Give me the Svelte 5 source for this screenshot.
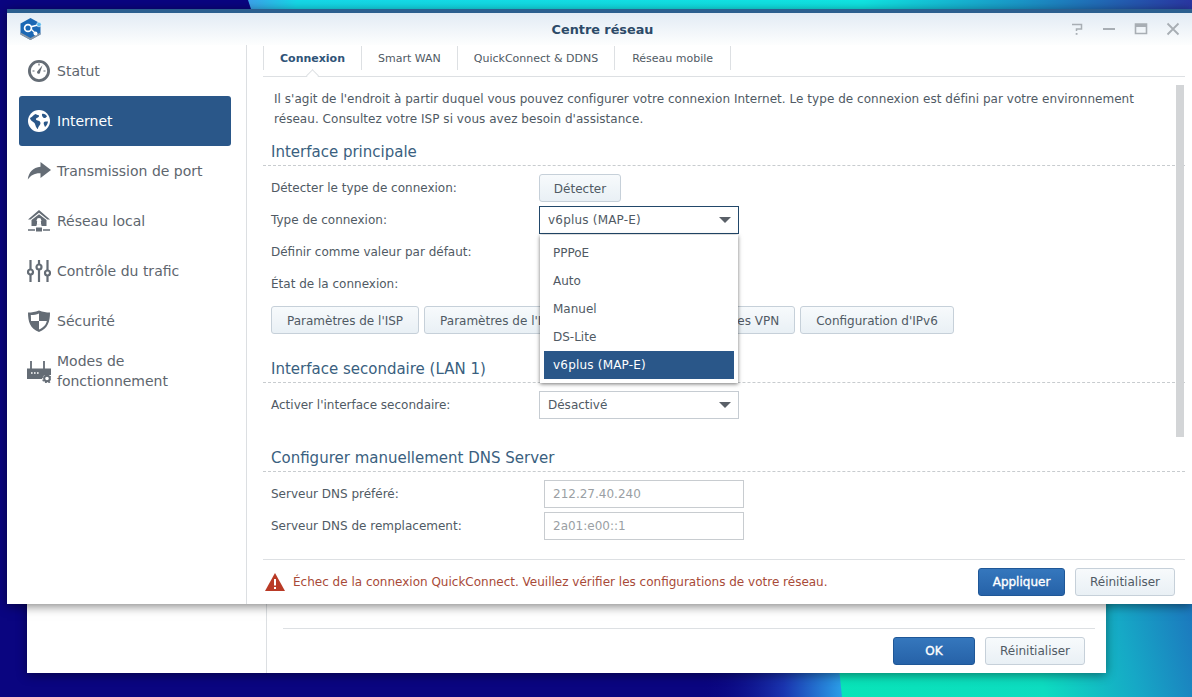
<script>
  const nav = [
    { id: 'gauge', label: 'Statut' },
    { id: 'globe', label: 'Internet', active: true },
    { id: 'share', label: 'Transmission de port' },
    { id: 'home', label: 'Réseau local' },
    { id: 'sliders', label: 'Contrôle du trafic' },
    { id: 'shield', label: 'Sécurité' },
    { id: 'router', label: 'Modes de fonctionnement' }
  ];
  const tabs = ['Connexion', 'Smart WAN', 'QuickConnect & DDNS', 'Réseau mobile'];
  const options = ['PPPoE', 'Auto', 'Manuel', 'DS-Lite', 'v6plus (MAP-E)'];
  const actions = ["Paramètres de l'ISP", "Paramètres de l'IPTV et de la VoIP", 'Paramètres VPN', "Configuration d'IPv6"];
</script>

{#snippet caret()}
  <svg class="caret" viewBox="0 0 12 6" width="12" height="6"><path d="M0 0h12L6 6z" /></svg>
{/snippet}

{#snippet icon(id)}
  <svg class="ico" viewBox="0 0 24 24" width="24" height="24">
    {#if id === 'gauge'}
      <circle cx="12" cy="12" r="9.6" fill="none" stroke="currentColor" stroke-width="2.8" />
      <path d="M15.5 6.2 13.2 13a1.6 1.6 0 1 1-2.6-1z" fill="currentColor" />
      <path d="M12 4.5v2M5.5 12h2M18.5 12h-2" stroke="currentColor" stroke-width="1.2" />
    {:else if id === 'globe'}
      <circle cx="12" cy="12" r="11" fill="currentColor" />
      <path d="M3 9c2-.5 3-3 5.5-4 1 1.2 3.5.5 3.5 2 0 2-3.5 1.5-3 3.5.5 1.500 4.500.8 4.500 3.500 0 2.500-2.500 3-2.500 6-2-.5-2.500-4.500-3.500-6C6 12.500 3.500 12 3 9zM15 5c2-.5 4 .5 5 2.500-1 .5-1.500 2-3 1.500-1-.5-2.500-2.500-2-4zM17 13c1.500-.8 3.500-.5 4-.5-.3 2.500-1.500 4.500-3 5.500-.5-1.500-2-3.500-1-5z" fill="#2a5789" />
    {:else if id === 'share'}
      <path d="M13.500 3.500 24 11.500l-10.500 8v-4.800C7.500 14.500 3.500 17 .8 21 1.500 14 6 8.700 13.500 8.200z" fill="currentColor" transform="translate(0 -.5)" />
    {:else if id === 'home'}
      <path d="M12 1 23 10.500h-2.500L12 3.800 3.500 10.500H1z" fill="currentColor" />
      <path d="M4.500 11 12 5.200l7.500 5.800v6h-5v-1.500h-5V17h-5z" fill="currentColor" />
      <circle cx="12" cy="11.300" r="2.300" fill="#fff" />
      <rect x="10" y="13" width="4" height="2.800" fill="#fff" />
      <path d="M1 21h7M16 21h7" stroke="currentColor" stroke-width="1.600" />
      <rect x="9" y="18.500" width="6" height="4" fill="currentColor" />
    {:else if id === 'sliders'}
      <g stroke="currentColor" stroke-width="2.200" fill="none">
        <path d="M3.500 1v9M3.500 16v7M12 1v4M12 11v12M20.500 1v10M20.500 17v6" />
        <circle cx="3.500" cy="13" r="2.500" />
        <circle cx="12" cy="8" r="2.500" />
        <circle cx="20.500" cy="14" r="2.500" />
      </g>
    {:else if id === 'shield'}
      <path d="M12 1.500c4 1.500 7 2 11 2 0 9-2 16-11 19.500C3 19.500 1 12.500 1 3.500c4 0 7-.5 11-2z" fill="currentColor" />
      <path d="M12 4.500V12H4c0-2 0-3.500-.2-6 3 0 5.700-.5 8.200-1.500zM12 12h7.800c-.7 3.500-3 6.500-7.800 8.500z" fill="#fff" />
    {:else}
      <path d="M4 2v8M17 2v8" stroke="currentColor" stroke-width="1.800" />
      <path d="M0 9.500h24v6.500h-6.500a6 6 0 0 0-2.500 4H0z" fill="currentColor" />
      <path d="M4 14h1.600M7 14h1.600M10 14h1.600" stroke="#fff" stroke-width="1.600" />
      <circle cx="20" cy="19.500" r="2.800" fill="none" stroke="currentColor" stroke-width="2" />
      <circle cx="20" cy="19.500" r="4.300" fill="none" stroke="currentColor" stroke-width="1.400" stroke-dasharray="1.800 1.600" />
    {/if}
  </svg>
{/snippet}

{#snippet footerButtons(primary)}
  <button class="btn primary" class:wide={primary === 'OK'}>{primary}</button>
  <button class="btn">Réinitialiser</button>
{/snippet}

<div class="desktop">
  <svg class="wallpaper" viewBox="0 0 1192 697" width="1192" height="697" aria-hidden="true">
    <defs>
      <linearGradient id="top" x1="250" x2="1192" y1="0" y2="0" gradientUnits="userSpaceOnUse">
        <stop offset="0" stop-color="#3aa4ea" />
        <stop offset="0.05" stop-color="#15d8e8" />
        <stop offset="0.65" stop-color="#10e4e2" />
        <stop offset="0.82" stop-color="#1a96c8" />
        <stop offset="1" stop-color="#2a36a2" />
      </linearGradient>
      <linearGradient id="glow" x1="700" x2="840" y1="0" y2="0" gradientUnits="userSpaceOnUse">
        <stop offset="0" stop-color="#0a0580" stop-opacity="0" />
        <stop offset="0.6" stop-color="#1a35b0" />
        <stop offset="1" stop-color="#2a9be6" />
      </linearGradient>
      <linearGradient id="bot" x1="840" x2="1192" y1="700" y2="610" gradientUnits="userSpaceOnUse">
        <stop offset="0" stop-color="#08e4b8" />
        <stop offset="0.55" stop-color="#0ddcc0" />
        <stop offset="0.8" stop-color="#16a8c6" />
        <stop offset="1" stop-color="#1c78be" />
      </linearGradient>
    </defs>
    <rect width="1192" height="697" fill="#0a0580" />
    <polygon points="248,0 1192,0 1192,12 252,12" fill="url(#top)" />
    <rect x="700" y="670" width="146" height="27" fill="url(#glow)" />
    <polygon points="832,600 1192,600 1192,697 842,697" fill="url(#bot)" />
  </svg>

  <section class="window back">
    <div class="win-body">
      <div class="side"></div>
      <div class="main">
        <div class="filler"></div>
        <div class="footer">
          <div class="spacer"></div>
          {@render footerButtons('OK')}
        </div>
      </div>
    </div>
  </section>

  <section class="window front">
    <header class="titlebar">
      <svg class="logo" viewBox="0 0 24 24" width="24" height="24">
        <path d="M11.500 1 21.500 6.500v11L11.500 23 1.500 17.500v-11z" fill="#1c68b4" />
        <path d="M1.500 17.500 11.500 23l10-5.500V15.500L11.500 21 1.500 15.500z" fill="#8d98a4" />
        <path d="M11 10 19 8M12 12l4.500 4.500" stroke="#fff" stroke-width="1.300" fill="none" />
        <circle cx="9" cy="11" r="3.400" fill="#1c68b4" stroke="#fff" stroke-width="1.700" />
        <circle cx="16.500" cy="16.500" r="2" fill="#fff" />
        <circle cx="20" cy="7.500" r="2.300" fill="#5ab8ec" stroke="#fff" stroke-width=".6" />
      </svg>
      <h1>Centre réseau</h1>
      <div class="winctl">
        <svg viewBox="0 0 14 14" width="14" height="14"><path d="M2 2.500h9.500v4.500H6.500v2" fill="none" stroke-width="1.500" /><path d="M5.700 11h1.800v1.800H5.700z" class="fill" /></svg>
        <svg viewBox="0 0 14 14" width="14" height="14"><path d="M1 7h12" fill="none" stroke-width="2" /></svg>
        <svg viewBox="0 0 14 14" width="14" height="14"><path d="M1.500 2h11v9.500h-11z" fill="none" stroke-width="1.600" /><path d="M1 2h12v3H1z" class="fill" /></svg>
        <svg viewBox="0 0 14 14" width="14" height="14"><path d="M1.500 1.500l11 11M12.500 1.500l-11 11" fill="none" stroke-width="1.800" /></svg>
      </div>
    </header>

    <div class="win-body">
      <nav class="side">
        {#each nav as item}
          <a class="nav-item" class:active={item.active} href="#top">
            {@render icon(item.id)}
            <span>{item.label}</span>
          </a>
        {/each}
      </nav>

      <div class="main">
        <div class="tabs">
          {#each tabs as tab, i}
            <button class="tab" class:current={i === 0}>{tab}</button>
          {/each}
        </div>

        <div class="panel">
          <p class="intro">Il s'agit de l'endroit à partir duquel vous pouvez configurer votre connexion Internet. Le type de connexion est défini par votre environnement<br />réseau. Consultez votre ISP si vous avez besoin d'assistance.</p>

          <h2>Interface principale</h2>
          <div class="rows">
            <div class="row"><label>Détecter le type de connexion:</label><button class="btn detect">Détecter</button></div>
            <div class="row">
              <label>Type de connexion:</label>
              <div class="select open">
                <span class="wider">v6plus (MAP-E)</span>
                {@render caret()}
                <ul class="menu">
                  {#each options as opt, i}
                    <li class:sel={i === options.length - 1}>{opt}</li>
                  {/each}
                </ul>
              </div>
            </div>
            <div class="row"><label>Définir comme valeur par défaut:</label></div>
            <div class="row"><label>État de la connexion:</label></div>
          </div>
          <div class="actions">
            {#each actions as a}
              <button class="btn">{a}</button>
            {/each}
          </div>

          <h2 class="second">Interface secondaire (LAN 1)</h2>
          <div class="rows">
            <div class="row">
              <label>Activer l'interface secondaire:</label>
              <div class="select"><span>Désactivé</span>{@render caret()}</div>
            </div>
          </div>

          <h2 class="third">Configurer manuellement DNS Server</h2>
          <div class="rows">
            <div class="row"><label>Serveur DNS préféré:</label><div class="input">212.27.40.240</div></div>
            <div class="row"><label>Serveur DNS de remplacement:</label><div class="input">2a01:e00::1</div></div>
          </div>

          <div class="scrollbar"></div>
        </div>

        <div class="footer">
          <svg class="warn" viewBox="0 0 20 18" width="20" height="18">
            <path d="M10 0 20 18H0z" fill="#b93a26" />
            <path d="M9 6h2v6.500H9zM9 14h2v2H9z" fill="#fff" />
          </svg>
          <span class="msg">Échec de la connexion QuickConnect. Veuillez vérifier les configurations de votre réseau.</span>
          <div class="spacer"></div>
          {@render footerButtons('Appliquer')}
        </div>
      </div>
    </div>
  </section>
</div>

<style>
  :global(body) {
    margin: 0;
    overflow: hidden;
    background: #0a0580;
  }
  .desktop {
    position: relative;
    width: 1192px;
    height: 697px;
    overflow: hidden;
    font-family: "DejaVu Sans", Verdana, sans-serif;
    font-size: 12px;
    color: #505a64;
  }
  .wallpaper {
    position: absolute;
    inset: 0;
  }
  .window {
    position: absolute;
    display: flex;
    flex-direction: column;
    background: #fff;
  }
  .back {
    left: 27px;
    top: 300px;
    width: 1079px;
    height: 373px;
    box-shadow: 0 2px 10px rgba(0, 0, 0, 0.45);
  }
  .back .main {
    padding-right: 11px;
  }
  .front {
    left: 7px;
    top: 9px;
    width: 1185px;
    height: 595px;
    border-top: 4px solid #2b5f8f;
    box-sizing: border-box;
    box-shadow: 0 2px 10px rgba(0, 0, 0, 0.5);
  }
  .titlebar {
    position: relative;
    display: flex;
    align-items: center;
    justify-content: center;
    height: 32px;
    flex: none;
    background: linear-gradient(#e2ebf4, #fdfefe);
  }
  .logo {
    position: absolute;
    left: 12px;
    top: 4px;
  }
  h1 {
    margin: 0;
    font-size: 12.8px;
    font-weight: 700;
    color: #2c4a68;
    transform: translateX(3px);
  }
  .winctl {
    position: absolute;
    right: 12px;
    top: 9px;
    display: flex;
    gap: 18px;
  }
  .winctl svg {
    stroke: #a8aeb4;
  }
  .winctl .fill {
    fill: #a8aeb4;
    stroke: none;
  }
  .win-body {
    flex: 1;
    display: flex;
    min-height: 0;
  }
  .side {
    width: 239px;
    flex: none;
    padding-top: 1px;
    border-right: 1px solid #dcdfe2;
  }
  .nav-item {
    display: flex;
    align-items: center;
    gap: 6px;
    height: 50px;
    margin: 0 15px 0 12px;
    padding-left: 8px;
    border-radius: 3px;
    font-size: 14px;
    line-height: 20px;
    color: #5e666e;
    text-decoration: none;
  }
  .nav-item:last-child span {
    width: 130px;
  }
  .ico {
    flex: none;
    color: #646c75;
  }
  .nav-item.active {
    background: #2a5789;
    color: #fff;
  }
  .nav-item.active .ico {
    color: #fff;
  }
  .main {
    position: relative;
    flex: 1;
    min-width: 0;
    display: flex;
    flex-direction: column;
    margin-left: 16px;
    padding-right: 7px;
  }
  .filler {
    flex: 1;
  }
  .tabs {
    display: flex;
    flex: none;
    height: 32px;
    box-sizing: border-box;
    padding-top: 1px;
    border-bottom: 1px solid #dde0e3;
  }
  .tab {
    position: relative;
    height: 24px;
    padding: 0 16px;
    border: 0;
    border-right: 1px solid #dde0e3;
    background: none;
    font: inherit;
    font-size: 11px;
    color: #505a64;
  }
  .tab:first-child {
    border-left: 1px solid #dde0e3;
  }
  .tab:last-child {
    padding: 0 17px;
  }
  .tab.current {
    font-weight: 700;
    color: #2f5478;
  }
  .tab.current::after {
    content: "";
    position: absolute;
    left: 44px;
    top: 25px;
    width: 8px;
    height: 8px;
    background: #fff;
    border-left: 1px solid #dde0e3;
    border-top: 1px solid #dde0e3;
    transform: rotate(45deg);
  }
  .panel {
    position: relative;
    flex: 1;
    min-height: 0;
  }
  .intro {
    margin: 0;
    padding: 12px 0 9px 11px;
    line-height: 20px;
    letter-spacing: 0.04px;
    white-space: nowrap;
  }
  h2 {
    margin: 0;
    height: 27px;
    padding-left: 8px;
    border-bottom: 1px dashed #c8cccf;
    font-size: 15px;
    font-weight: 400;
    line-height: 29px;
    color: #3a5f80;
  }
  h2.second {
    margin-top: 21px;
  }
  h2.third {
    margin-top: 25px;
  }
  .rows {
    display: flex;
    flex-direction: column;
    gap: 4px;
    margin-top: 8px;
    padding-left: 8px;
  }
  .row {
    display: grid;
    grid-template-columns: 268px auto;
    justify-content: start;
    align-items: center;
    height: 28px;
  }
  .actions {
    display: flex;
    gap: 5px;
    margin-top: 8px;
    padding-left: 8px;
  }
  .btn {
    height: 28px;
    padding: 1px 15px 0;
    border: 1px solid #c6d0d9;
    border-radius: 3px;
    background: linear-gradient(#f7fafc, #e9f0f5);
    font: inherit;
    color: #505a64;
    white-space: nowrap;
  }
  .actions .btn:nth-child(2) {
    padding-right: 18px;
  }
  .detect {
    width: 82px;
    padding: 1px 0 0;
  }
  .footer .btn {
    width: 100px;
    padding: 1px 0 0;
  }
  .footer .btn.primary {
    width: 87px;
    margin-right: 10px;
    border-color: #1f5797;
    background: linear-gradient(#3577bd, #2662a8);
    color: #fff;
    -webkit-text-stroke: 0.35px #fff;
  }
  .footer .btn.primary.wide {
    width: 82px;
  }
  .select {
    position: relative;
    display: flex;
    align-items: center;
    justify-content: space-between;
    width: 200px;
    height: 28px;
    box-sizing: border-box;
    padding: 0 7px 0 8px;
    border: 1px solid #c6ccd2;
  }
  .select.open {
    border-color: #22486a;
  }
  .wider {
    letter-spacing: 0.2px;
  }
  .caret {
    fill: #5a6068;
  }
  .menu {
    position: absolute;
    left: 0;
    top: 28px;
    width: 198px;
    margin: 0;
    padding: 4px;
    box-sizing: border-box;
    list-style: none;
    background: #fff;
    box-shadow: 0 1px 4px rgba(0, 0, 0, 0.55);
    z-index: 2;
  }
  .menu li {
    height: 28px;
    padding-left: 9px;
    line-height: 28px;
  }
  .menu li.sel {
    background: #2a5789;
    color: #fff;
    letter-spacing: 0.2px;
  }
  .input {
    width: 200px;
    height: 28px;
    margin-left: 5px;
    box-sizing: border-box;
    padding-left: 8px;
    border: 1px solid #c8ccd0;
    color: #9a9fa4;
    line-height: 26px;
  }
  .scrollbar {
    position: absolute;
    right: 1px;
    top: 8px;
    width: 8px;
    height: 352px;
    background: #d3d5d7;
  }
  .footer {
    display: flex;
    align-items: center;
    flex: none;
    height: 45px;
    box-sizing: border-box;
    padding: 0 10px 1px 2px;
    border-top: 1px solid #dde0e3;
  }
  .warn {
    flex: none;
    margin-right: 8px;
  }
  .msg {
    color: #a84a38;
    white-space: nowrap;
  }
  .spacer {
    flex: 1;
  }
</style>
